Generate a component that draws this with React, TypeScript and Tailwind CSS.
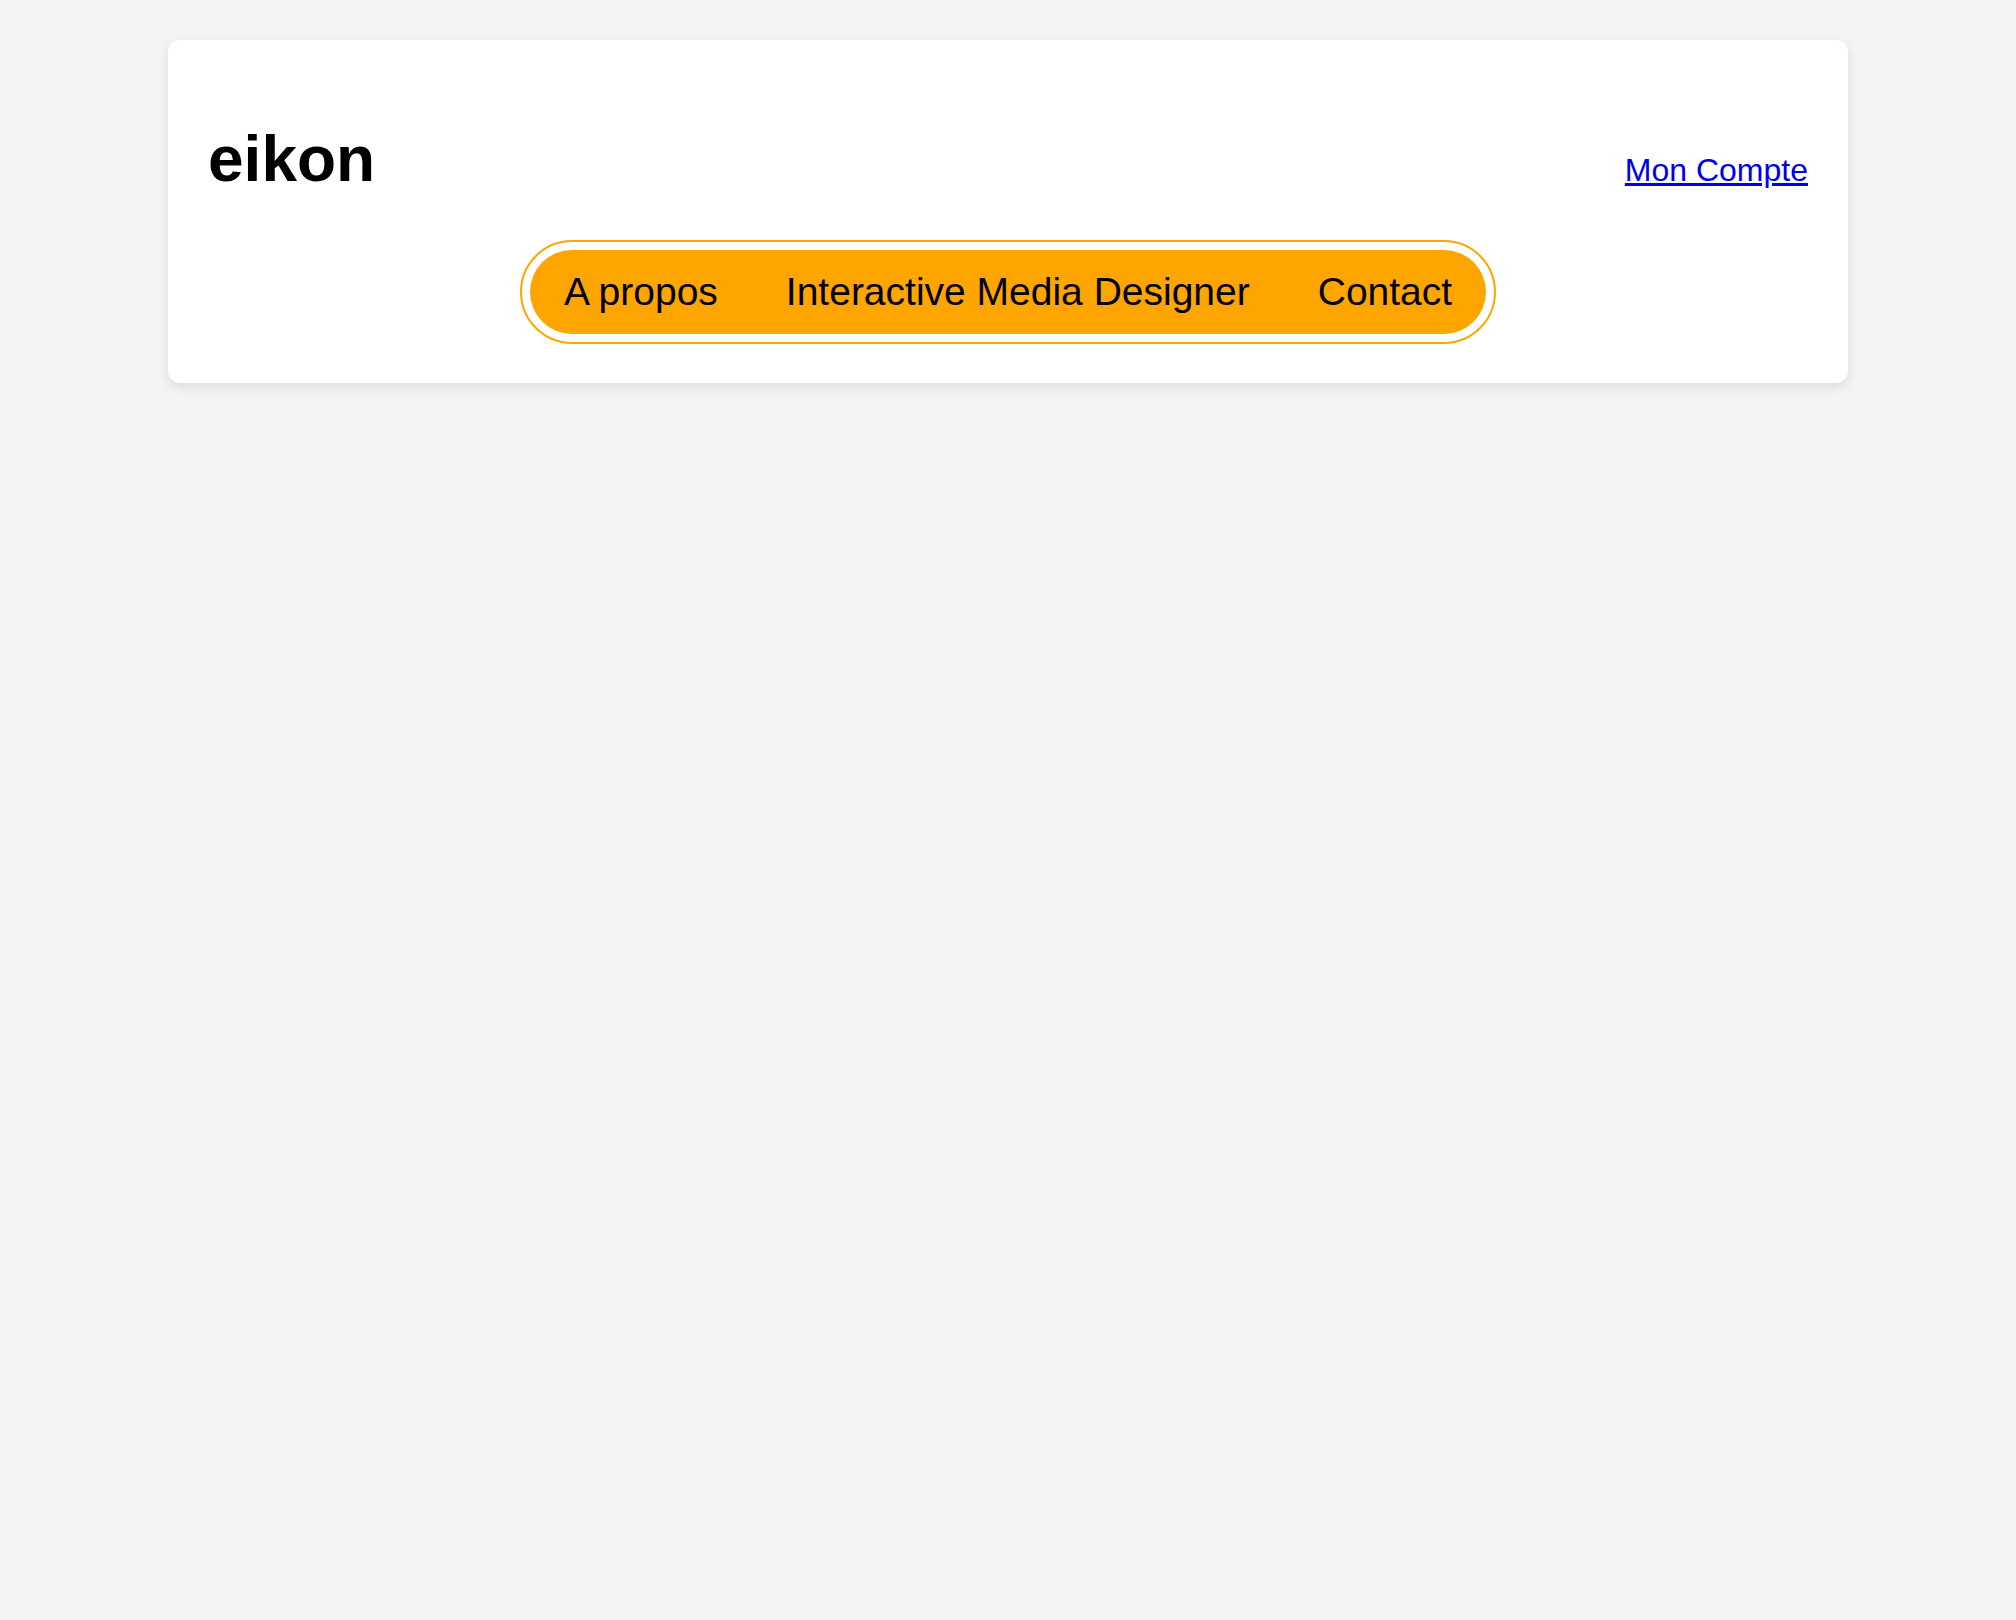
const links = ['A propos', 'Interactive Media Designer', 'Contact']

const App = () => {
  return (
    <div className="min-h-[1620px] bg-[#f4f4f4] pt-10 font-['Liberation_Sans',Arial,sans-serif] text-black">
      <header className="mx-auto w-[1680px] rounded-xl bg-white px-10 pt-10 pb-[39px] shadow-[0_4px_12px_rgba(0,0,0,0.1)]">
        <div className="flex items-baseline justify-between">
          <h1 className="my-[43px] text-[64px] font-bold leading-[1.15]">eikon</h1>
          <a href="#" className="text-[32px] text-[#0000ee] underline">
            Mon Compte
          </a>
        </div>
        <nav className="flex justify-center">
          <div className="rounded-full border-2 border-[#ffa500] p-2">
            <ul className="flex h-[84px] items-center rounded-full bg-[#ffa500]">
              {links.map((l) => (
                <li key={l} className="px-[34px] pt-[2px] text-[39px] leading-[1.15]">
                  <a href="#">{l}</a>
                </li>
              ))}
            </ul>
          </div>
        </nav>
      </header>
    </div>
  )
}

export default App
